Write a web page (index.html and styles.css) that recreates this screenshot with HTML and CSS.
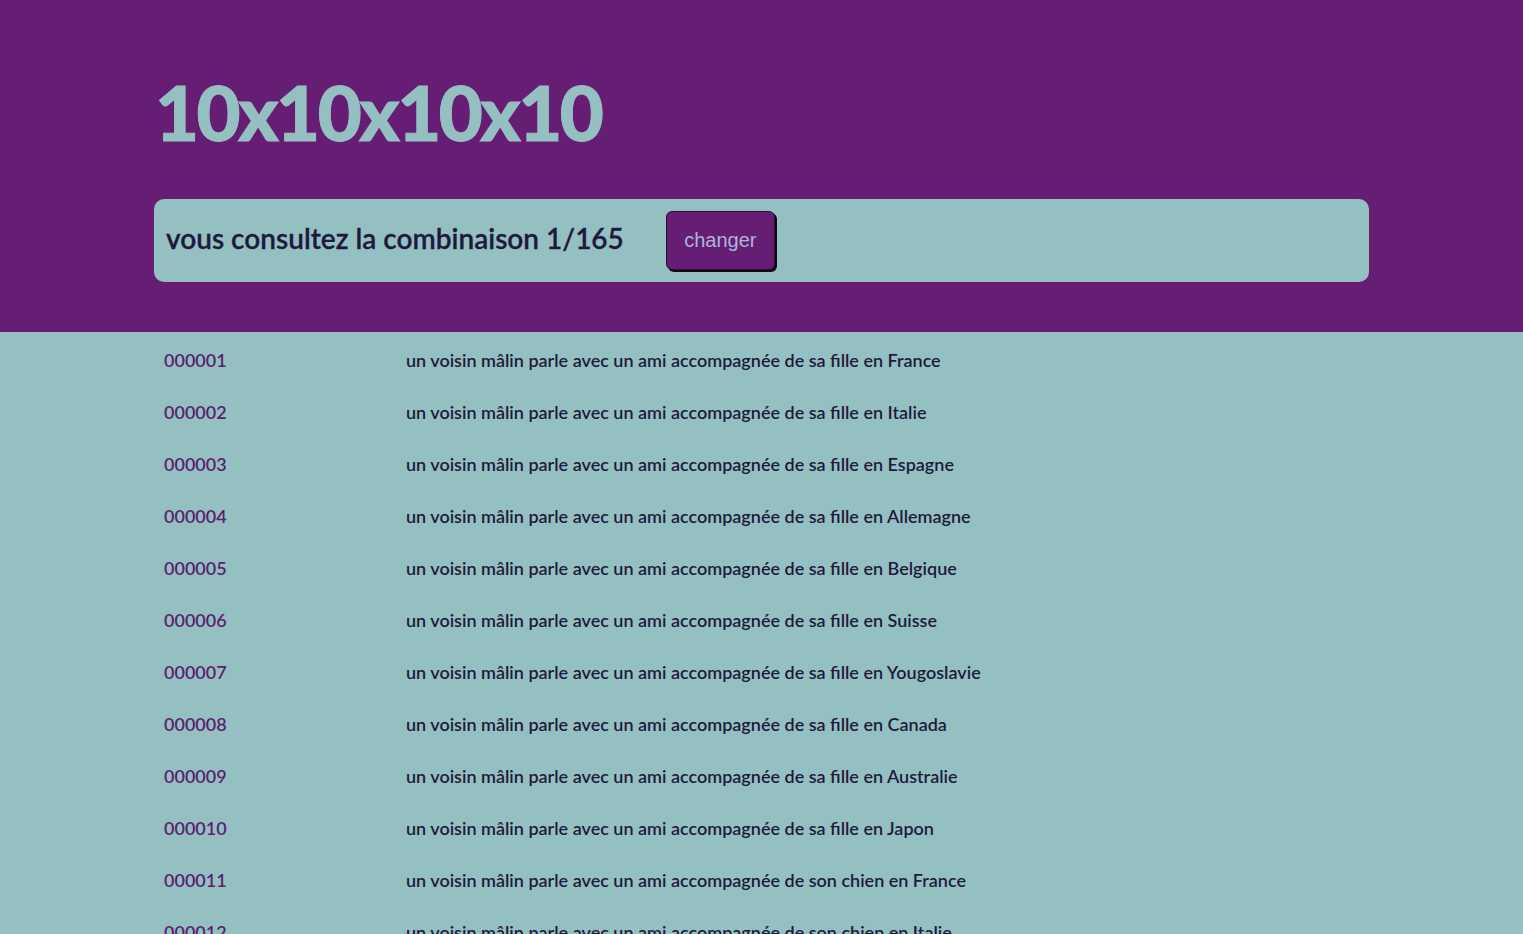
FILE: index.html
```html
<!DOCTYPE html>
<html lang="fr">
<head>
<meta charset="utf-8">
<title>10x10x10x10</title>
<link rel="stylesheet" href="styles.css">
</head>
<body>
<header class="header">
  <div class="wrap">
    <h1 class="title">10x10x10x10</h1>
    <div class="panel">
      <span class="panel-text">vous consultez la combinaison 1/165</span>
      <button class="btn" type="button">changer</button>
    </div>
  </div>
</header>
<main class="wrap list">
  <div class="row"><span class="num">000001</span><span class="txt">un voisin mâlin parle avec un ami accompagnée de sa fille en France</span></div>
  <div class="row"><span class="num">000002</span><span class="txt">un voisin mâlin parle avec un ami accompagnée de sa fille en Italie</span></div>
  <div class="row"><span class="num">000003</span><span class="txt">un voisin mâlin parle avec un ami accompagnée de sa fille en Espagne</span></div>
  <div class="row"><span class="num">000004</span><span class="txt">un voisin mâlin parle avec un ami accompagnée de sa fille en Allemagne</span></div>
  <div class="row"><span class="num">000005</span><span class="txt">un voisin mâlin parle avec un ami accompagnée de sa fille en Belgique</span></div>
  <div class="row"><span class="num">000006</span><span class="txt">un voisin mâlin parle avec un ami accompagnée de sa fille en Suisse</span></div>
  <div class="row"><span class="num">000007</span><span class="txt">un voisin mâlin parle avec un ami accompagnée de sa fille en Yougoslavie</span></div>
  <div class="row"><span class="num">000008</span><span class="txt">un voisin mâlin parle avec un ami accompagnée de sa fille en Canada</span></div>
  <div class="row"><span class="num">000009</span><span class="txt">un voisin mâlin parle avec un ami accompagnée de sa fille en Australie</span></div>
  <div class="row"><span class="num">000010</span><span class="txt">un voisin mâlin parle avec un ami accompagnée de sa fille en Japon</span></div>
  <div class="row"><span class="num">000011</span><span class="txt">un voisin mâlin parle avec un ami accompagnée de son chien en France</span></div>
  <div class="row"><span class="num">000012</span><span class="txt">un voisin mâlin parle avec un ami accompagnée de son chien en Italie</span></div>
  <div class="row"><span class="num">000013</span><span class="txt">un voisin mâlin parle avec un ami accompagnée de son chien en Espagne</span></div>
  <div class="row"><span class="num">000014</span><span class="txt">un voisin mâlin parle avec un ami accompagnée de son chien en Allemagne</span></div>
</main>
</body>
</html>
```

FILE: styles.css
```css
html, body {
  margin: 0;
  padding: 0;
}
body {
  background: #95c0c2;
  font-family: "Lato", "Noto Sans", sans-serif;
  color: #1e1a3c;
}
.wrap {
  width: 1215px;
  margin: 0 0 0 154px;
}
.header {
  background: #661e74;
  padding: 0 0 50px;
}
.header .wrap {
  padding-top: 65px;
}
.title {
  margin: 0 0 41px 1px;
  font-size: 76px;
  line-height: 93px;
  font-weight: 900;
  letter-spacing: -2.5px;
  color: #95c0c2;
  -webkit-text-stroke: 1px #95c0c2;
}
.panel {
  background: #95c0c2;
  border-radius: 10px;
  height: 83px;
  box-sizing: border-box;
  padding: 0 12px;
  display: flex;
  align-items: center;
  gap: 42px;
}
.panel-text {
  font-size: 28px;
  font-weight: 600;
  color: #1e1a3c;
  margin-top: -6px;
  -webkit-text-stroke: 0.3px #1e1a3c;
}
.btn {
  width: 109px;
  height: 59px;
  background: #661e74;
  border: 1px solid #2a0f30;
  border-radius: 6px;
  box-shadow: 2px 2px 0 #140818;
  font-family: "Liberation Sans", Arial, sans-serif;
  font-size: 20px;
  color: #aab6d6;
  padding: 0;
}
.list {
  padding-top: 16px;
}
.row {
  display: grid;
  grid-template-columns: 242px 1fr;
  height: 52px;
  align-items: start;
  padding-left: 10px;
  font-size: 18px;
  line-height: 24px;
}
.num {
  color: #5a1f6e;
  font-weight: 600;
}
.txt {
  color: #1e1a3c;
  font-weight: 600;
}
```
